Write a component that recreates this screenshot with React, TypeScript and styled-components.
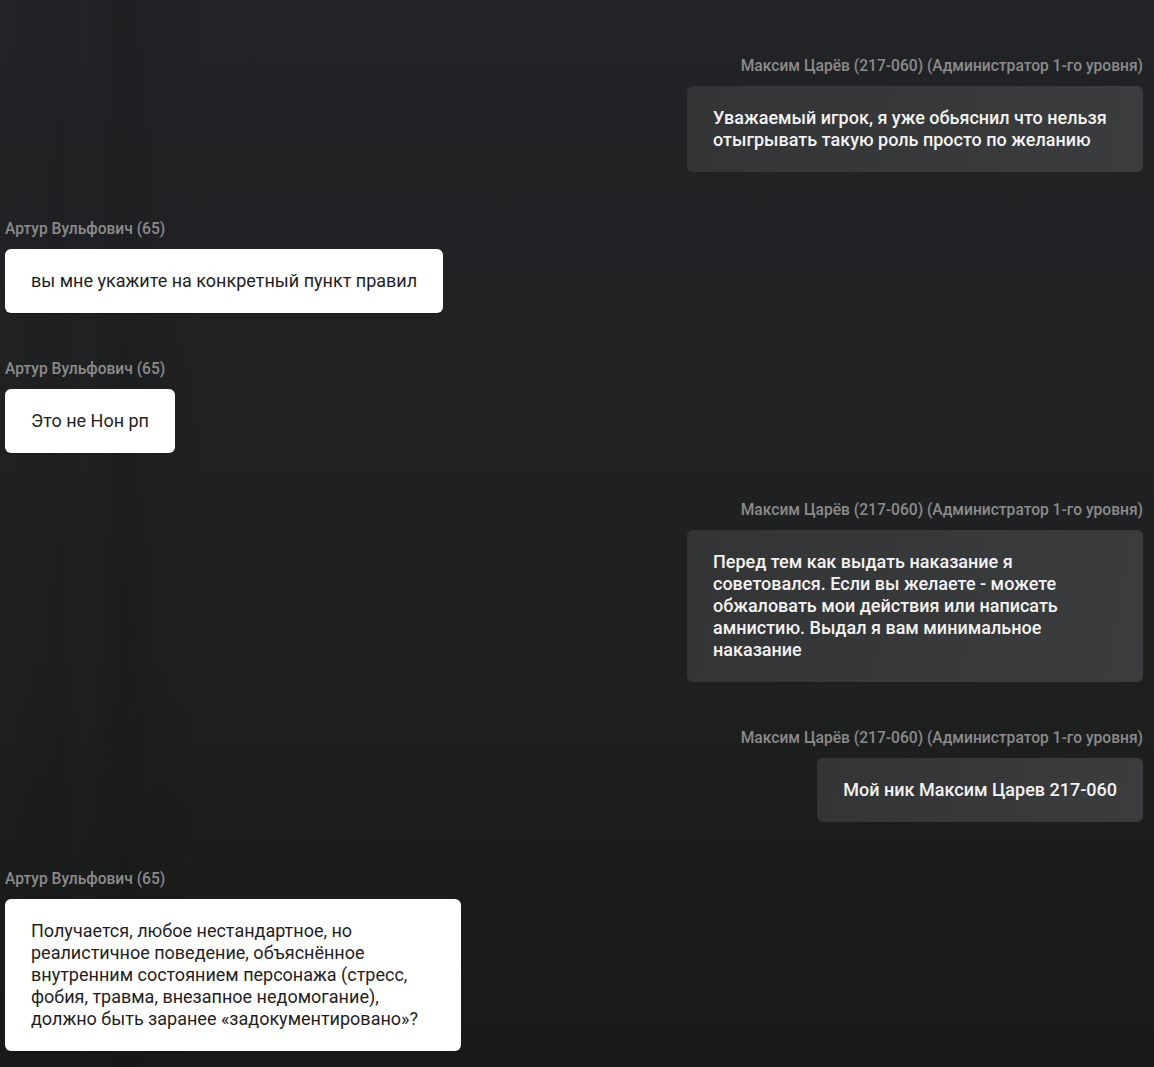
import React from "react";
import styled, { createGlobalStyle } from "styled-components";

const GlobalStyle = createGlobalStyle`
  html, body {
    margin: 0;
    padding: 0;
    background: #1e1f20;
  }
  body {
    font-family: Roboto, "Noto Sans", "Liberation Sans", sans-serif;
  }
`;

const Screen = styled.div`
  min-height: 1067px;
  box-sizing: border-box;
  padding: 57px 11px 20px 5px;
  background:
    linear-gradient(90deg,
      rgba(0, 0, 0, 0) 0px,
      rgba(0, 0, 0, 0.06) 60px,
      rgba(0, 0, 0, 0) 85px,
      rgba(0, 0, 0, 0.1) 125px,
      rgba(0, 0, 0, 0.03) 160px,
      rgba(0, 0, 0, 0) 230px,
      rgba(0, 0, 0, 0) 100%),
    linear-gradient(180deg, #222326 0%, #202123 35%, #1e1f1f 65%, #19191a 100%);
  display: flex;
  flex-direction: column;
  gap: 47.6px;
`;

const Message = styled.div<{ $admin?: boolean }>`
  display: flex;
  flex-direction: column;
  align-items: ${(p) => (p.$admin ? "flex-end" : "flex-start")};
  gap: 11px;
`;

const Author = styled.div`
  font-size: 15.6px;
  line-height: 18px;
  font-weight: 500;
  color: #8b8b8b;
  white-space: nowrap;
`;

const Bubble = styled.div<{ $admin?: boolean }>`
  box-sizing: border-box;
  max-width: 456px;
  padding: 21px 26px;
  border-radius: 6px;
  font-size: 18px;
  line-height: 22px;
  font-weight: ${(p) => (p.$admin ? 500 : 400)};
  color: ${(p) => (p.$admin ? "#f3f3f3" : "#1e1e1e")};
  background: ${(p) =>
    p.$admin
      ? "linear-gradient(100deg, #333436 0%, #38393b 60%, #3b3c3e 100%)"
      : "#ffffff"};
  box-shadow: ${(p) => (p.$admin ? "none" : "0 1px 1px rgba(0,0,0,0.25)")};
`;

type Msg = { admin: boolean; author: string; text: string };

const ADMIN = "Максим Царёв (217-060) (Администратор 1-го уровня)";
const PLAYER = "Артур Вульфович (65)";

const messages: Msg[] = [
  {
    admin: true,
    author: ADMIN,
    text: "Уважаемый игрок, я уже обьяснил что нельзя отыгрывать такую роль просто по желанию",
  },
  { admin: false, author: PLAYER, text: "вы мне укажите на конкретный пункт правил" },
  { admin: false, author: PLAYER, text: "Это не Нон рп" },
  {
    admin: true,
    author: ADMIN,
    text: "Перед тем как выдать наказание я советовался. Если вы желаете - можете обжаловать мои действия или написать амнистию. Выдал я вам минимальное наказание",
  },
  { admin: true, author: ADMIN, text: "Мой ник Максим Царев 217-060" },
  {
    admin: false,
    author: PLAYER,
    text: "Получается, любое нестандартное, но реалистичное поведение, объяснённое внутренним состоянием персонажа (стресс, фобия, травма, внезапное недомогание), должно быть заранее «задокументировано»?",
  },
];

export default function App() {
  return (
    <>
      <GlobalStyle />
      <Screen>
        {messages.map((m, i) => (
          <Message key={i} $admin={m.admin}>
            <Author>{m.author}</Author>
            <Bubble $admin={m.admin}>{m.text}</Bubble>
          </Message>
        ))}
      </Screen>
    </>
  );
}
